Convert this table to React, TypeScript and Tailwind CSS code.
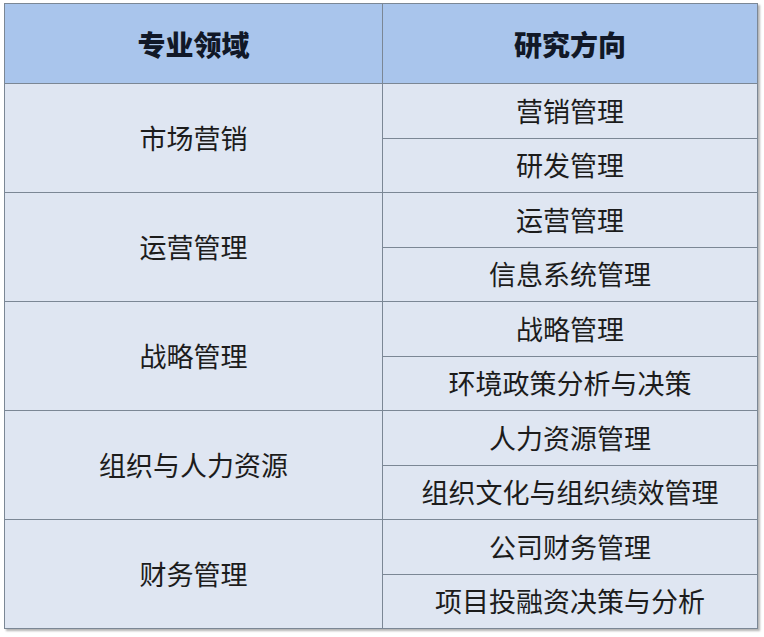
import React from "react"

interface Group {
  field: string
  directions: string[]
}

const groups: Group[] = [
  { field: "市场营销", directions: ["营销管理", "研发管理"] },
  { field: "运营管理", directions: ["运营管理", "信息系统管理"] },
  { field: "战略管理", directions: ["战略管理", "环境政策分析与决策"] },
  { field: "组织与人力资源", directions: ["人力资源管理", "组织文化与组织绩效管理"] },
  { field: "财务管理", directions: ["公司财务管理", "项目投融资决策与分析"] },
]

const cell = "border border-[#7b8795] text-center align-middle"

export default function App() {
  return (
    <div
      className="min-h-[637px] w-[764px] bg-white pl-[4px] pt-[3px]"
      style={{ fontFamily: '"Microsoft YaHei", "Noto Sans CJK SC", sans-serif' }}
    >
      <table className="w-[753px] table-fixed border-collapse text-[27px] text-[#1c1c1c] shadow-[2px_2px_2px_rgba(0,0,0,0.3)]">
        <colgroup>
          <col className="w-[378px]" />
          <col className="w-[375px]" />
        </colgroup>
        <thead>
          <tr className="h-[80px] bg-[#a9c5ec]">
            <th className={`${cell} text-[28px] font-black text-[#111827]`}>专业领域</th>
            <th className={`${cell} text-[28px] font-black text-[#111827]`}>研究方向</th>
          </tr>
        </thead>
        <tbody className="bg-[#dfe6f2]">
          {groups.map((g) =>
            g.directions.map((d, i) => (
              <tr key={g.field + d} className="h-[54.5px]">
                {i === 0 && (
                  <td rowSpan={2} className={cell}>
                    {g.field}
                  </td>
                )}
                <td className={cell}>{d}</td>
              </tr>
            ))
          )}
        </tbody>
      </table>
    </div>
  )
}
